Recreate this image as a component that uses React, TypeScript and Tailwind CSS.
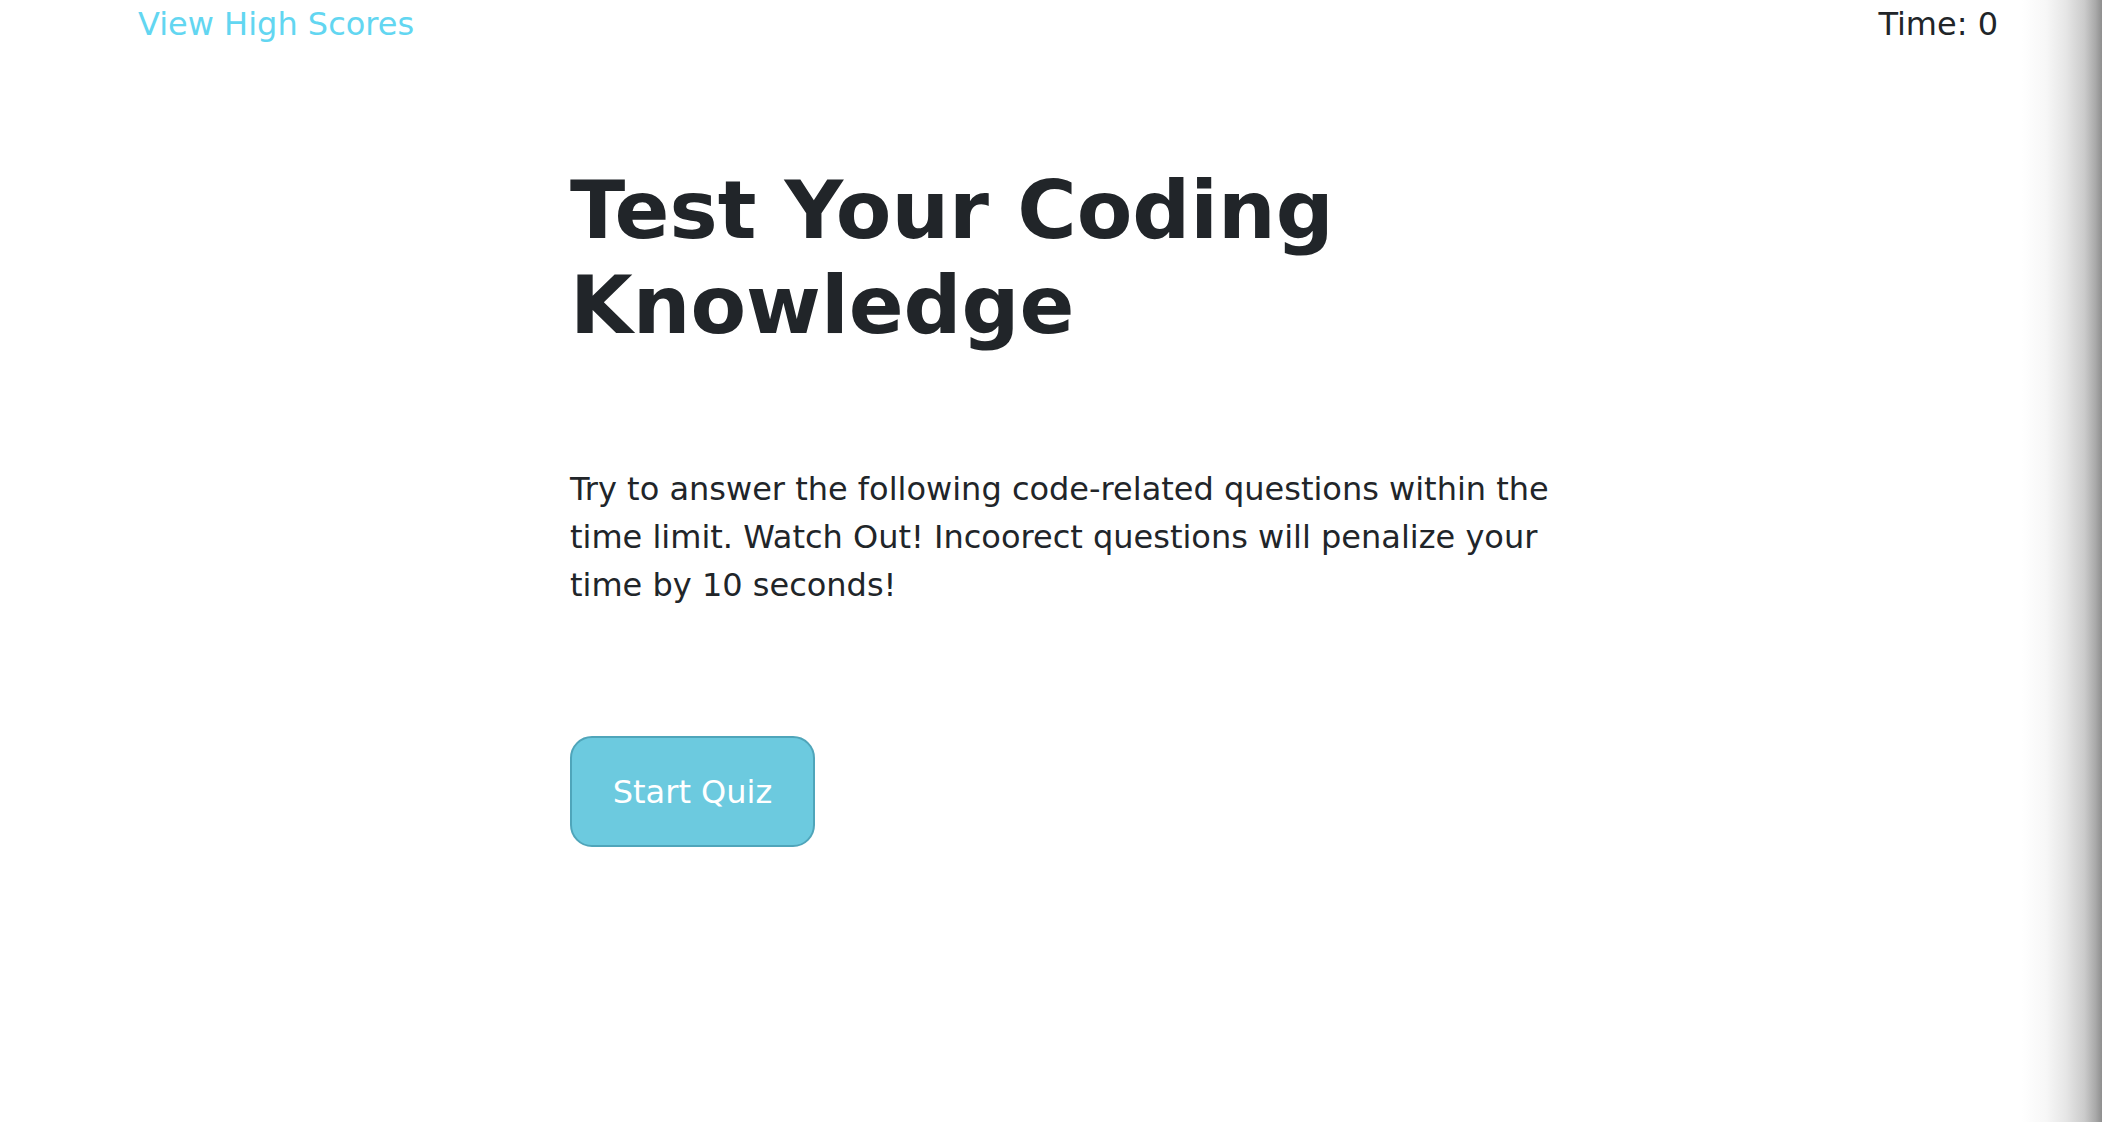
import React from "react";

export default function App() {
  return (
    <div className="flex min-h-[1122px] w-full bg-white font-['DejaVu_Sans',Verdana,sans-serif] text-[#212529]">
      <div className="flex flex-1 flex-col">
        <header className="flex items-start justify-between pl-[138px] pr-[24px] text-[32px] leading-[48px]">
          <a className="text-[#62d6f1]" href="#">View High Scores</a>
          <span className="text-[#212529]">Time: 0</span>
        </header>
        <main className="ml-[570px] flex w-[1020px] flex-col items-start">
          <h1 className="mt-[115px] text-[81px] font-bold leading-[95px] text-[#212529]">
            Test Your Coding Knowledge
          </h1>
          <p className="mt-[112px] text-[32px] leading-[48px] text-[#212529]">
            Try to answer the following code-related questions within the time limit. Watch Out! Incoorect questions will penalize your time by 10 seconds!
          </p>
          <button className="mt-[127px] h-[111px] w-[245px] rounded-[22px] border-2 border-[#4fa5ba] bg-[#6ccadf] text-[32px] leading-[48px] text-white">
            Start Quiz
          </button>
        </main>
      </div>
      <div className="w-[80px] shrink-0 bg-[linear-gradient(to_right,#ffffff_0%,#f7f7f7_30%,#e6e6e6_55%,#cbcbcb_78%,#a9a9a9_92%,#8e8e8e_100%)]" />
    </div>
  );
}
